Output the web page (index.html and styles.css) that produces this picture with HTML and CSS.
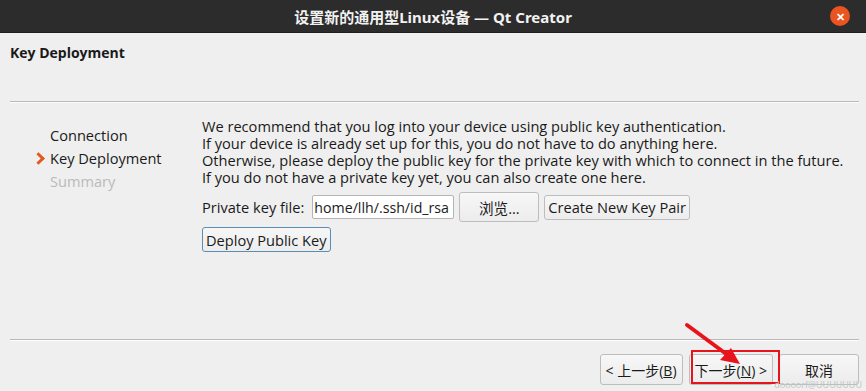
FILE: index.html
```html
<!DOCTYPE html>
<html lang="zh-CN">
<head>
    <meta charset="UTF-8">
    <title>设置新的通用型Linux设备 — Qt Creator</title>
    <link rel="stylesheet" href="styles.css">
</head>
<body>
    <div class="window">
        <div class="titlebar">
            <span></span>
            <span class="title">设置新的通用型Linux设备 — Qt Creator</span>
            <span class="close">&#x2715;</span>
        </div>

        <div class="page">
            <div class="page-head">Key Deployment</div>
            <div class="rule"></div>

            <div class="main">
                <ul class="steps">
                    <li>Connection</li>
                    <li class="current">Key Deployment</li>
                    <li class="pending">Summary</li>
                </ul>

                <div class="content">
                    <div class="intro">
                        <div>We recommend that you log into your device using public key authentication.</div>
                        <div>If your device is already set up for this, you do not have to do anything here.</div>
                        <div>Otherwise, please deploy the public key for the private key with which to connect in the future.</div>
                        <div>If you do not have a private key yet, you can also create one here.</div>
                    </div>
                    <div class="key-row">
                        <span class="label">Private key file:</span>
                        <input class="path" type="text" value="home/llh/.ssh/id_rsa">
                        <button class="btn browse">浏览...</button>
                        <button class="btn">Create New Key Pair</button>
                    </div>
                    <button class="btn focused">Deploy Public Key</button>
                </div>
            </div>

            <div class="rule"></div>

            <div class="footer">
                <button class="btn nav">&lt; 上一步(<u>B</u>)</button>
                <button class="btn nav">下一步(<u>N</u>) &gt;</button>
                <button class="btn nav">取消</button>
            </div>
        </div>

        <svg class="markup" width="866" height="391" viewBox="0 0 866 391">
            <rect x="692" y="351" width="87" height="32" fill="none" stroke="#e8141b" stroke-width="2"/>
            <line x1="687" y1="325" x2="729" y2="356" stroke="#e8141b" stroke-width="4" stroke-linecap="round"/>
            <polygon points="740,364 720,360 731,348" fill="#e8141b"/>
        </svg>
        <span class="watermark">doooorf@UUUUUUU</span>
    </div>
</body>
</html>
```

FILE: styles.css
```css
body {
    margin: 0;
    font-family: "Open Sans", "Noto Sans CJK SC", sans-serif;
    font-size: 14.6px;
    color: #1a1a1a;
}
.window {
    position: relative;
    width: 866px;
    height: 391px;
    background-color: #efefef;
    overflow: hidden;
}
.titlebar {
    height: 32px;
    background-color: #2c2c2c;
    display: grid;
    grid-template-columns: 1fr auto 1fr;
    align-items: center;
    border-bottom: 1px solid #1e1e1e;
}
.title {
    color: #f2f2f2;
    font-weight: bold;
    font-size: 15px;
    font-family: "Noto Sans", "Noto Sans CJK SC", sans-serif;
}
.close {
    justify-self: end;
    margin-right: 16px;
    width: 20px;
    height: 20px;
    border-radius: 50%;
    background-color: #e95420;
    color: #ffffff;
    font-size: 11px;
    font-weight: bold;
    display: flex;
    align-items: center;
    justify-content: center;
}
.page {
    padding: 0 7px 0 10px;
}
.page-head {
    font-weight: bold;
    font-size: 14px;
    height: 68px;
    padding-top: 10px;
    box-sizing: border-box;
}
.rule {
    height: 1px;
    background-color: #b9b9b9;
    border-bottom: 1px solid #fdfdfd;
}
.main {
    display: flex;
    height: 236px;
}
.steps {
    list-style: none;
    margin: 0;
    padding: 21px 0 0 40px;
    width: 152px;
}
.steps li {
    height: 23px;
    line-height: 23px;
    position: relative;
}
.steps .current::before {
    content: "";
    position: absolute;
    left: -16px;
    top: 7px;
    width: 6px;
    height: 6px;
    border-top: 3px solid #e2591d;
    border-right: 3px solid #e2591d;
    transform: rotate(45deg);
}
.steps .pending {
    color: #bababa;
}
.content {
    padding-top: 15px;
}
.intro {
    margin-bottom: 6px;
}
.intro div {
    height: 17px;
    line-height: 17px;
}
.key-row {
    display: flex;
    align-items: center;
    gap: 5px;
    margin-bottom: 5px;
}
.label {
    margin-right: 3px;
}
.path {
    width: 142px;
    height: 24px;
    box-sizing: border-box;
    border: 1px solid #b4b4b4;
    border-radius: 2px;
    padding: 0 1px;
    font: inherit;
    font-size: 14.2px;
    color: #1a1a1a;
    background: #ffffff;
}
.btn {
    font: inherit;
    color: #1a1a1a;
    height: 25px;
    padding: 0 3px;
    background: linear-gradient(#f7f7f7, #ececec);
    border: 1px solid #bdbdbd;
    border-radius: 3px;
}
.browse {
    width: 80px;
    height: 30px;
}
.focused {
    border-color: #5a8fb5;
}
.footer {
    display: flex;
    justify-content: flex-end;
    gap: 6px;
    padding-top: 13px;
}
.nav {
    height: 31px;
    min-width: 80px;
    padding: 0 5px;
    font-size: 14px;
}
.markup {
    position: absolute;
    left: 0;
    top: 0;
    pointer-events: none;
}
.watermark {
    position: absolute;
    right: 4px;
    bottom: 0;
    font-size: 9px;
    color: #c4c4c4;
}
```
